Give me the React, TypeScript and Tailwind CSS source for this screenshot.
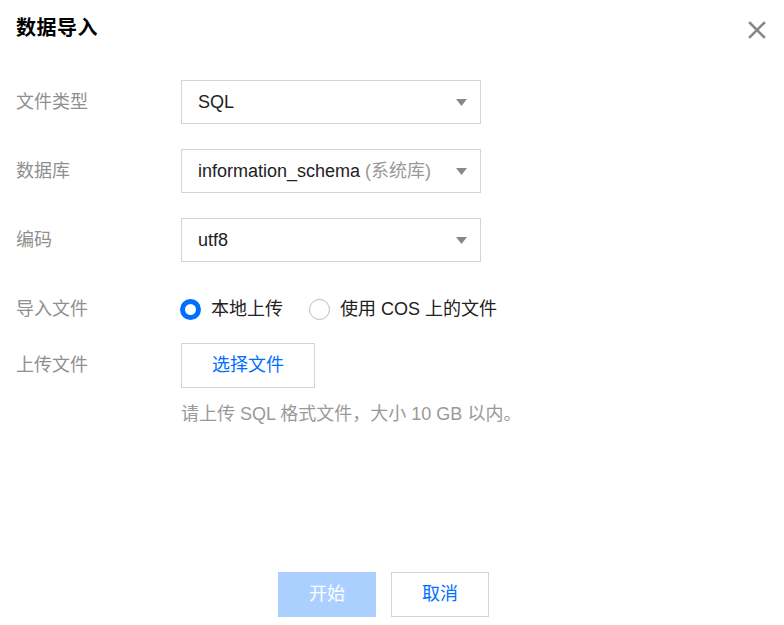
import React from "react";

const font = { fontFamily: '"Liberation Sans", "Noto Sans CJK SC", sans-serif' };

function Arrow() {
  return (
    <svg width="11" height="7" viewBox="0 0 11 7" className="shrink-0">
      <polygon points="0,0 11,0 5.5,7" fill="#888888" />
    </svg>
  );
}

function Select({ children }: { children: React.ReactNode }) {
  return (
    <div className="flex items-center justify-between w-[300px] h-[44px] border border-[#cfd5de] bg-white pl-[16px] pr-[13px] text-[18px] text-[#222]">
      <span className="whitespace-nowrap">{children}</span>
      <Arrow />
    </div>
  );
}

function Row({ label, children, className = "" }: { label: string; children: React.ReactNode; className?: string }) {
  return (
    <div className={`flex items-center min-h-[44px] ${className}`}>
      <div className="w-[165px] shrink-0 text-[18px] text-[#8f8f8f]">{label}</div>
      {children}
    </div>
  );
}

export default function App() {
  return (
    <div className="w-[784px] h-[625px] bg-white flex flex-col" style={font}>
      <div className="flex items-center justify-between pl-[16px] pr-[18px] pt-[14px]">
        <div className="text-[20px] leading-[28px] font-bold text-[#000] tracking-[0.5px]">数据导入</div>
        <svg width="18" height="18" viewBox="0 0 18 18" className="mt-[3px]">
          <path d="M2 2 L16 16 M16 2 L2 16" stroke="#888" strokeWidth="2.6" strokeLinecap="square" />
        </svg>
      </div>

      <div className="flex flex-col pl-[16px] mt-[38px]">
        <Row label="文件类型">
          <Select>SQL</Select>
        </Row>
        <Row label="数据库" className="mt-[25px]">
          <Select>
            information_schema <span className="text-[#999]">(系统库)</span>
          </Select>
        </Row>
        <Row label="编码" className="mt-[25px]">
          <Select>utf8</Select>
        </Row>
        <Row label="导入文件" className="mt-[25px]">
          <div className="flex items-center text-[18px] text-[#222]">
            <span className="w-[21px] h-[21px] rounded-full border-[5px] border-[#006eff] bg-white -ml-[1px]" />
            <span className="ml-[10px]">本地上传</span>
            <span className="w-[21px] h-[21px] rounded-full border border-[#bbb] bg-white ml-[26px]" />
            <span className="ml-[10px]">使用 COS 上的文件</span>
          </div>
        </Row>
        <Row label="上传文件" className="mt-[12px]">
          <div className="w-[134px] h-[45px] border border-[#cfd5de] flex items-center justify-center text-[18px] text-[#006eff]">
            选择文件
          </div>
        </Row>
        <div className="pl-[165px] mt-[13px] text-[18px] leading-[27px] text-[#999]">
          请上传 SQL 格式文件，大小 10 GB 以内。
        </div>
      </div>

      <div className="mt-auto mb-[8px] flex justify-center gap-[15px] pr-[17px]">
        <div className="w-[98px] h-[45px] bg-[#abd0ff] flex items-center justify-center text-[18px] text-white">开始</div>
        <div className="w-[98px] h-[45px] border border-[#cfd5de] bg-white flex items-center justify-center text-[18px] text-[#006eff]">取消</div>
      </div>
    </div>
  );
}
